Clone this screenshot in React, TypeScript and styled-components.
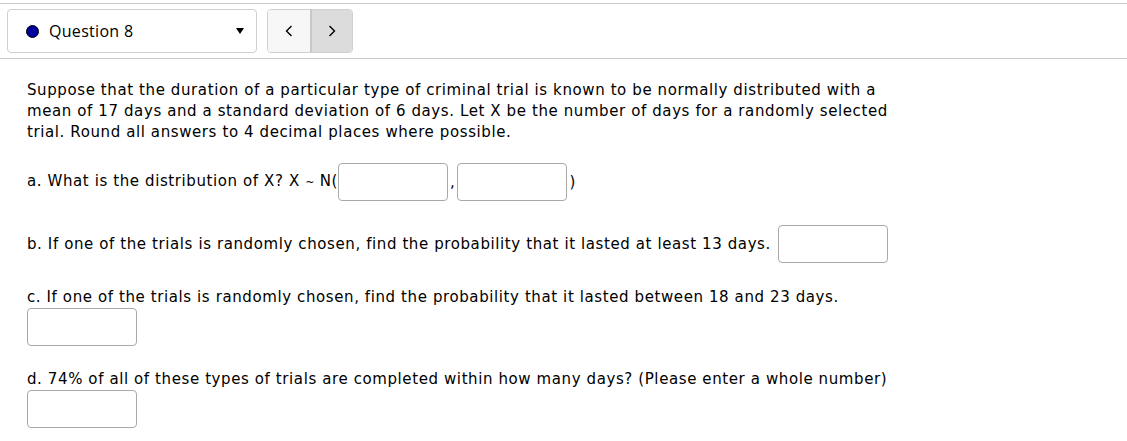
import styled, { createGlobalStyle } from "styled-components";

const GlobalStyle = createGlobalStyle`
  body {
    margin: 0;
    background: #fff;
    color: #000;
    font-family: "DejaVu Sans", "Liberation Sans", sans-serif;
  }
`;

const Chevron: React.FC<{ dir: "left" | "right" }> = ({ dir }) => (
  <svg width="8" height="12" viewBox="0 0 8 12">
    <path
      d={dir === "left" ? "M6.5 1 L1.5 6 L6.5 11" : "M1.5 1 L6.5 6 L1.5 11"}
      fill="none"
      stroke="#000"
      strokeWidth="1.4"
    />
  </svg>
);

const App: React.FC = () => {
  return (
    <Page>
      <GlobalStyle />
      <Header>
        <QuestionSelect>
          <Dot />
          <SelectLabel>Question 8</SelectLabel>
          <Caret />
        </QuestionSelect>
        <NavGroup>
          <NavButton>
            <Chevron dir="left" />
          </NavButton>
          <NavButton $active>
            <Chevron dir="right" />
          </NavButton>
        </NavGroup>
      </Header>
      <Content>
        <Intro>
          Suppose that the duration of a particular type of criminal trial is
          known to be normally distributed with a mean of 17 days and a
          standard deviation of 6 days. Let X be the number of days for a
          randomly selected trial. Round all answers to 4 decimal places where
          possible.
        </Intro>
        <InlineRow>
          <span>
            a. What is the distribution of X? X <Tilde>~</Tilde> N(
          </span>
          <Answer type="text" />
          <Sep>,</Sep>
          <Answer type="text" />
          <Sep>)</Sep>
        </InlineRow>
        <InlineRow>
          <span>
            b. If one of the trials is randomly chosen, find the probability
            that it lasted at least 13 days.
          </span>
          <Answer type="text" $gap />
        </InlineRow>
        <Part $space={23}>
          c. If one of the trials is randomly chosen, find the probability that
          it lasted between 18 and 23 days.
          <Answer type="text" $block />
        </Part>
        <Part $space={24}>
          d. 74% of all of these types of trials are completed within how many
          days? (Please enter a whole number)
          <Answer type="text" $block />
        </Part>
      </Content>
    </Page>
  );
};

const Page = styled.div`
  padding-top: 3px;
`;

const Header = styled.div`
  display: flex;
  align-items: center;
  gap: 10px;
  padding: 5px 7px;
  border-top: 1px solid #cbcbcb;
  border-bottom: 1px solid #cbcbcb;
`;

const QuestionSelect = styled.div`
  box-sizing: border-box;
  width: 250px;
  height: 44px;
  display: flex;
  align-items: center;
  padding: 0 12px 0 18px;
  border: 1px solid #cfcfcf;
  border-radius: 4px;
  background: #fff;
`;

const Dot = styled.span`
  box-sizing: border-box;
  width: 13px;
  height: 13px;
  border-radius: 50%;
  background: #00009c;
  border: 1px solid #000;
  margin-right: 10px;
`;

const SelectLabel = styled.span`
  flex: 1;
  font-family: "Open Sans", "Noto Sans", sans-serif;
  font-size: 16px;
  letter-spacing: 0.3px;
`;

const Caret = styled.span`
  width: 0;
  height: 0;
  border-left: 4px solid transparent;
  border-right: 4px solid transparent;
  border-top: 6px solid #000;
`;

const NavGroup = styled.div`
  display: flex;
  height: 44px;
  border: 1px solid #d0d0d0;
  border-radius: 4px;
  overflow: hidden;
  box-sizing: border-box;
`;

const NavButton = styled.button<{ $active?: boolean }>`
  width: 42px;
  border: none;
  padding: 0;
  display: flex;
  align-items: center;
  justify-content: center;
  background: ${(p) => (p.$active ? "#dcdcdc" : "#f7f7f7")};
  border-left: ${(p) => (p.$active ? "2px solid #c8c8c8" : "none")};
`;

const Content = styled.div`
  padding: 0 27px;
  font-size: 15px;
  letter-spacing: 0.6px;
  line-height: 21px;
`;

const Intro = styled.p`
  margin: 21px 0 20px;
  max-width: 865px;
`;

const InlineRow = styled.div`
  display: flex;
  align-items: center;
  white-space: pre;
  margin-bottom: 24px;
`;

const Tilde = styled.span`
  font-size: 11px;
  letter-spacing: 0;
`;

const Sep = styled.span`
  padding: 0 2px;
`;

const Part = styled.div<{ $space: number }>`
  margin-bottom: ${(p) => p.$space}px;
`;

const Answer = styled.input<{ $block?: boolean; $gap?: boolean }>`
  box-sizing: border-box;
  display: ${(p) => (p.$block ? "block" : "inline-block")};
  width: 110px;
  height: 38px;
  margin: 0 0 0 ${(p) => (p.$gap ? "7px" : "0")};
  border: 1px solid #a9a9a9;
  border-radius: 4px;
  font-size: 15px;
  padding: 2px 6px;
`;

export default App;
